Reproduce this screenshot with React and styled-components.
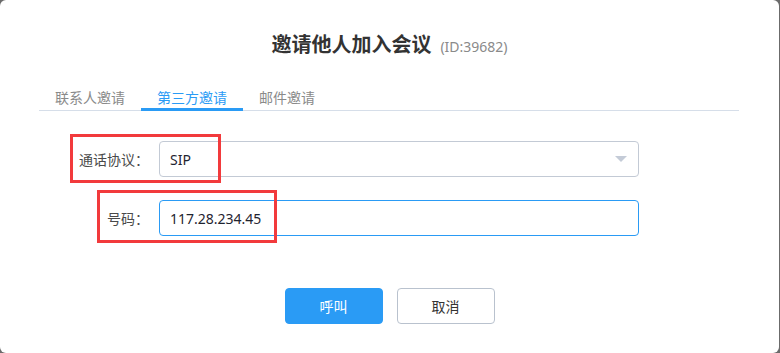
import React from 'react'
import styled, { createGlobalStyle } from 'styled-components'

const GlobalStyle = createGlobalStyle`
  html, body {
    margin: 0;
    padding: 0;
    background: #6b6b6b;
    font-family: "Noto Sans", "Noto Sans CJK SC", sans-serif;
  }
`

const colors = {
  primary: '#2a9bf5',
  text: '#333333',
  label: '#4a4a4a',
  muted: '#8a8a8a',
  border: '#c3cad5',
  line: '#d6dee9',
  mark: '#f23a3c',
}

const Dialog = styled.div`
  width: 779px;
  height: 353px;
  background: #fff;
  border-radius: 6px;
  box-sizing: border-box;
  display: flex;
  flex-direction: column;
`

const Title = styled.h1`
  margin: 30px 0 0;
  height: 28px;
  line-height: 28px;
  text-align: center;
  font-size: 20px;
  font-weight: 700;
  color: ${colors.text};
  font-family: "Noto Sans CJK SC", sans-serif;

  small {
    margin-left: 9px;
    font-size: 14px;
    font-weight: 400;
    color: ${colors.muted};
    font-family: "Noto Sans", sans-serif;
  }
`

const TabBar = styled.div`
  display: flex;
  margin: 28px 40px 0 39px;
  border-bottom: 1px solid ${colors.line};
`

const Tab = styled.div`
  padding: 0 16px;
  line-height: 22px;
  font-size: 14px;
  font-family: "Noto Sans CJK SC", sans-serif;
  color: ${p => (p.$active ? colors.primary : colors.muted)};
  border-bottom: 3px solid ${p => (p.$active ? colors.primary : 'transparent')};
  margin-bottom: -1px;
  cursor: pointer;
`

const Form = styled.div`
  display: flex;
  flex-direction: column;
  gap: 23px;
  margin-top: 30px;
`

const Row = styled.div`
  position: relative;
  display: flex;
  align-items: center;
  height: 36px;
`

const Label = styled.label`
  width: 110px;
  margin: 0 10px 0 39px;
  text-align: right;
  font-size: 14px;
  font-family: "Noto Sans CJK SC", sans-serif;
  color: ${colors.label};
`

const Field = styled.div`
  width: 480px;
  height: 36px;
  box-sizing: border-box;
  display: flex;
  align-items: center;
  padding: 0 11px 0 10px;
  border: 1px solid ${p => (p.$focused ? colors.primary : colors.border)};
  border-radius: 4px;
  font-size: 14px;
  color: #1f2430;
`

const Caret = styled.span`
  margin-left: auto;
  width: 0;
  height: 0;
  border-left: 6px solid transparent;
  border-right: 6px solid transparent;
  border-top: 6px solid #c4cbd7;
`

const Mark = styled.div`
  position: absolute;
  left: ${p => p.$left}px;
  top: ${p => p.$top}px;
  width: ${p => p.$w}px;
  height: ${p => p.$h}px;
  box-sizing: border-box;
  border: 3px solid ${colors.mark};
  pointer-events: none;
`

const Actions = styled.div`
  display: flex;
  justify-content: center;
  gap: 14px;
  margin-top: 52px;
`

const Button = styled.button`
  width: 98px;
  height: 36px;
  border-radius: 4px;
  font-size: 14px;
  font-family: "Noto Sans CJK SC", sans-serif;
  cursor: pointer;
  background: ${p => (p.$primary ? colors.primary : '#fff')};
  color: ${p => (p.$primary ? '#fff' : colors.text)};
  border: 1px solid ${p => (p.$primary ? colors.primary : '#b9c2ce')};
`

const tabs = ['联系人邀请', '第三方邀请', '邮件邀请']

export default function App() {
  return (
    <>
      <GlobalStyle />
      <Dialog>
        <Title>
          邀请他人加入会议<small>(ID:39682)</small>
        </Title>
        <TabBar>
          {tabs.map((t, i) => (
            <Tab key={t} $active={i === 1}>{t}</Tab>
          ))}
        </TabBar>
        <Form>
          <Row>
            <Label>通话协议：</Label>
            <Field>
              SIP
              <Caret />
            </Field>
            <Mark $left={70} $top={-7} $w={151} $h={49} />
          </Row>
          <Row>
            <Label>号码：</Label>
            <Field $focused>117.28.234.45</Field>
            <Mark $left={97} $top={-10} $w={180} $h={53} />
          </Row>
        </Form>
        <Actions>
          <Button $primary>呼叫</Button>
          <Button>取消</Button>
        </Actions>
      </Dialog>
    </>
  )
}
